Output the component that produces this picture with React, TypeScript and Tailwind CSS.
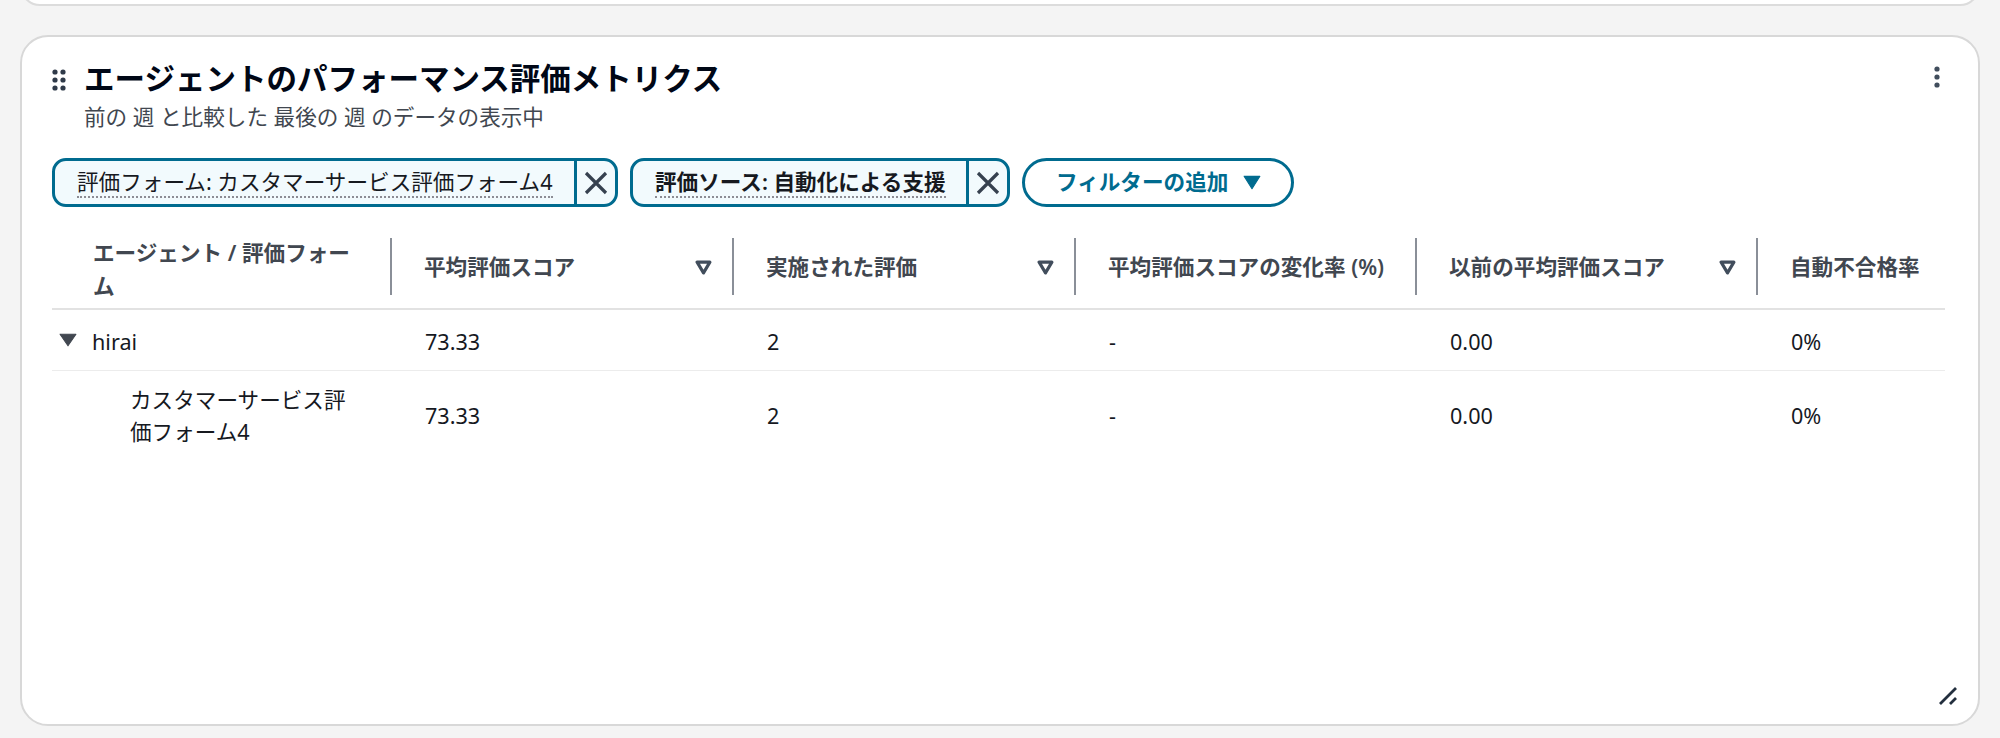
const font = '"Noto Sans", "Noto Sans CJK JP", sans-serif';

const columns = [
  { label: '平均評価スコア', sort: true },
  { label: '実施された評価', sort: true },
  { label: '平均評価スコアの変化率 (%)', sort: false },
  { label: '以前の平均評価スコア', sort: true },
  { label: '自動不合格率', sort: false }
];

const values = ['73.33', '2', '-', '0.00', '0%'];

function Grip() {
  return (
    <svg width="14" height="22" viewBox="0 0 14 22" className="fill-[#2f3a49] shrink-0">
      <circle cx="3" cy="3" r="2.6" />
      <circle cx="11" cy="3" r="2.6" />
      <circle cx="3" cy="11" r="2.6" />
      <circle cx="11" cy="11" r="2.6" />
      <circle cx="3" cy="19" r="2.6" />
      <circle cx="11" cy="19" r="2.6" />
    </svg>
  );
}

function Kebab() {
  return (
    <svg width="6" height="22" viewBox="0 0 6 22" className="fill-[#414d5c] shrink-0">
      <circle cx="3" cy="3" r="2.6" />
      <circle cx="3" cy="11" r="2.6" />
      <circle cx="3" cy="19" r="2.6" />
    </svg>
  );
}

function Close() {
  return (
    <svg width="24" height="24" viewBox="0 0 24 24" fill="none" className="stroke-[#36414f]" strokeWidth="3.2">
      <path d="M2 2 L22 22 M22 2 L2 22" />
    </svg>
  );
}

function SortIcon() {
  return (
    <svg width="17" height="15" viewBox="0 0 16 14" fill="none" className="stroke-[#414d5c] shrink-0" strokeWidth="3" strokeLinejoin="round">
      <path d="M2 2 H14 L8 12 Z" />
    </svg>
  );
}

function Chip({ text, bold, textWidth }: { text: string; bold?: boolean; textWidth: string }) {
  return (
    <div className="flex h-[49px] rounded-[14px] border-[3px] border-[#006b8f] bg-[#f2fafd] overflow-hidden">
      <div className={`flex items-center pl-[22px] border-r-[3px] border-[#006b8f] ${textWidth}`}>
        <span className={`text-[21.6px] leading-[28px] text-[#16191f] border-b-2 border-dotted border-[#8c8c94] whitespace-nowrap ${bold ? 'font-semibold' : ''}`}>
          {text}
        </span>
      </div>
      <div className="flex-1 w-[38px] flex items-center justify-center">
        <Close />
      </div>
    </div>
  );
}

export default function App() {
  return (
    <div className="h-[738px] overflow-hidden bg-[#f4f4f4] px-[20px]" style={{ fontFamily: font }}>
      <div className="-mt-[35px] h-[41px] rounded-[20px] bg-white border-2 border-[#dcdcdc]" />

      <div className="relative mt-[29px] h-[691px] rounded-[28px] bg-white border-2 border-[#d8d8d8] pl-[30px] pr-[33px] pt-[22px] overflow-hidden">
        <div className="flex items-start justify-between">
          <div className="flex gap-[18px] items-start">
            <div className="pt-[10px]">
              <Grip />
            </div>
            <div>
              <h1 className="text-[30.5px] leading-[38px] font-bold text-[#000716]">エージェントのパフォーマンス評価メトリクス</h1>
              <p className="mt-[2px] text-[21.6px] leading-[36px] text-[#414750]">前の 週 と比較した 最後の 週 のデータの表示中</p>
            </div>
          </div>
          <div className="pt-[7px] mr-[5px]">
            <Kebab />
          </div>
        </div>

        <div className="flex gap-[12px] mt-[23px]">
          <Chip text="評価フォーム: カスタマーサービス評価フォーム4" textWidth="w-[522px]" />
          <Chip text="評価ソース: 自動化による支援" bold textWidth="w-[336px]" />
          <button className="flex items-center gap-[15px] h-[49px] pl-[31px] pr-[30px] rounded-full border-[3px] border-[#006b8f] text-[#006b8f] text-[21.6px] font-semibold whitespace-nowrap">
            フィルターの追加
            <svg width="18" height="15" viewBox="0 0 16 13" className="fill-[#006b8f]">
              <path d="M1 1 H15 L8 12 Z" stroke="#006b8f" strokeLinejoin="round" />
            </svg>
          </button>
        </div>

        <div className="mt-[31px]">
          <div className="grid grid-cols-[340px_342px_342px_341px_341px_184px] border-b-2 border-[#e2e2e2] pb-[13px]">
            <div className="h-[57px] border-r-2 border-[#8a8f98] pl-[41px] pr-[30px] pt-[5px] flex items-center text-[21.6px] leading-[33px] font-semibold text-[#414750]">
              エージェント / 評価フォーム
            </div>
            {columns.map((c, i) => (
              <div key={c.label} className={`h-[57px] pl-[32px] pr-[20px] pt-[2px] flex items-center justify-between text-[21.6px] font-semibold text-[#414750] whitespace-nowrap ${i < 4 ? 'border-r-2 border-[#8a8f98]' : ''}`}>
                {c.label}
                {c.sort && <SortIcon />}
              </div>
            ))}
          </div>

          <div className="grid grid-cols-[340px_342px_342px_341px_341px_184px] h-[61px] pt-[4px] items-center border-b border-[#ececec] text-[21.6px] text-[#16191f]">
            <div className="flex items-center pl-[7px] gap-[15px]">
              <svg width="18" height="14" viewBox="0 0 17 13" className="fill-[#414750] -mt-[4px]">
                <path d="M1 1 H16 L8.5 12 Z" stroke="#414750" strokeLinejoin="round" />
              </svg>
              hirai
            </div>
            {values.map((v, i) => (
              <div key={i} className="pl-[33px]">{v}</div>
            ))}
          </div>

          <div className="grid grid-cols-[340px_342px_342px_341px_341px_184px] h-[86px] pt-[3px] items-center text-[21.6px] text-[#16191f]">
            <div className="pl-[78px] pr-[40px] leading-[32px]">カスタマーサービス評価フォーム4</div>
            {values.map((v, i) => (
              <div key={i} className="pl-[33px] pt-[2px]">{v}</div>
            ))}
          </div>
        </div>

        <svg width="18" height="18" viewBox="0 0 18 18" fill="none" className="absolute right-[21px] bottom-[19px] stroke-[#232f3e]" strokeWidth="2.8">
          <path d="M1 17 L17 1 M11 17 L17 11" />
        </svg>
      </div>
    </div>
  );
}
